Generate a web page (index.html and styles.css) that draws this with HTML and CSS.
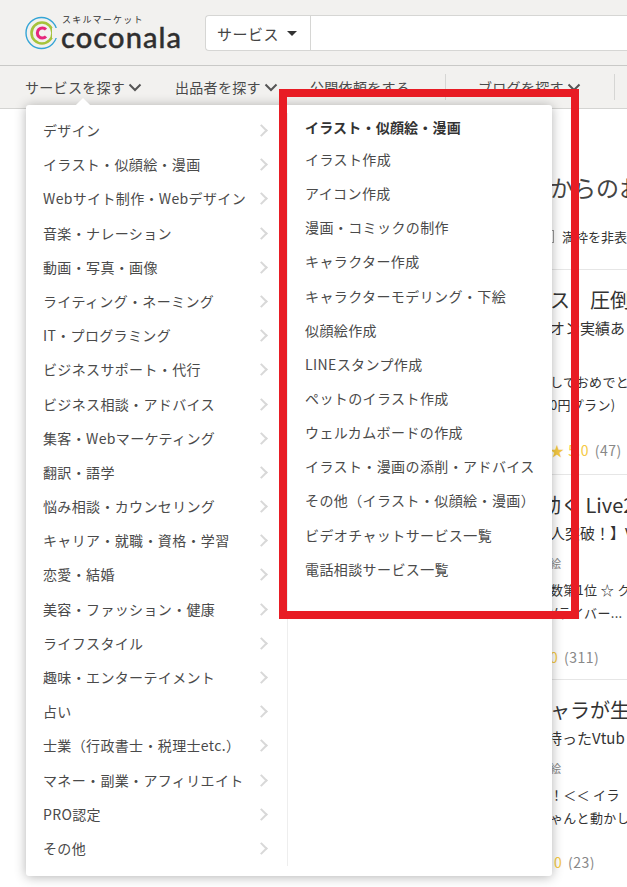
FILE: index.html
```html
<!DOCTYPE html>
<html lang="ja">
<head>
    <meta charset="UTF-8">
    <title>ココナラ</title>
    <link rel="stylesheet" href="styles.css">
</head>
<body>

<header class="top-bar">
    <a class="logo">
        <svg class="logo-mark" width="32" height="36" viewBox="0 0 32 36">
            <circle cx="16.5" cy="18" r="15.5" fill="none" stroke="#35a5d6" stroke-width="1.4"/>
            <circle cx="17" cy="18" r="10.5" fill="none" stroke="#a5c33c" stroke-width="2.6"/>
            <path d="M21 14.600a5 5 0 1 0 0 6.800" fill="none" stroke="#e6267c" stroke-width="3"/>
            <rect x="27" y="13" width="6" height="10" fill="#f2f1ef"/>
        </svg>
        <div class="logo-text">
            <span class="logo-kana">スキルマーケット</span>
            <span class="logo-name">coconala</span>
        </div>
    </a>
    <div class="search">
        <div class="search-select">サービス<span class="caret"></span></div>
        <div class="search-input"></div>
    </div>
</header>

<nav class="main-nav">
    <div class="nav-item nav-first">サービスを探す<svg class="chev" width="14" height="9" viewBox="0 0 14 9"><path d="M1.500 1.500 7 7l5.500-5.500"/></svg></div>
    <div class="nav-item nav-second">出品者を探す<svg class="chev" width="14" height="9" viewBox="0 0 14 9"><path d="M1.500 1.500 7 7l5.500-5.500"/></svg></div>
    <div class="nav-item nav-third">公開依頼をする</div>
    <div class="nav-item nav-fourth">ブログを探す<svg class="chev" width="14" height="9" viewBox="0 0 14 9"><path d="M1.500 1.500 7 7l5.500-5.500"/></svg></div>
    <div class="nav-item nav-last"></div>
</nav>

<main class="content">
    <h2 class="content-title">からのお</h2>
    <div class="filter"><span class="check"></span>満枠を非表</div>

    <article class="service service-one">
        <div class="service-title">ス　圧倒</div>
        <div class="service-sub">オン実績あ</div>
        <div class="service-desc">しておめでと<br>0円プラン)</div>
        <div class="rating"><span class="star">★ 5.0</span> (47)</div>
    </article>
    <article class="service service-two">
        <div class="service-title">動く Live2</div>
        <div class="service-sub">人突破！】V</div>
        <div class="service-cat">絵</div>
        <div class="service-desc">数第1位 ☆ ク<br>Vライバー...</div>
        <div class="rating"><span class="star">0</span> (311)</div>
    </article>
    <article class="service service-three">
        <div class="service-title">ャラが生</div>
        <div class="service-sub">持ったVtub</div>
        <div class="service-cat">絵</div>
        <div class="service-desc">！＜＜ イラ<br>ゃんと動かし</div>
        <div class="rating"><span class="star">0</span> (23)</div>
    </article>
</main>

<div class="mega-menu">
    <span class="menu-arrow"></span>
    <ul class="cat-list">
        <li>デザイン</li>
        <li>イラスト・似顔絵・漫画</li>
        <li>Webサイト制作・Webデザイン</li>
        <li>音楽・ナレーション</li>
        <li>動画・写真・画像</li>
        <li>ライティング・ネーミング</li>
        <li>IT・プログラミング</li>
        <li>ビジネスサポート・代行</li>
        <li>ビジネス相談・アドバイス</li>
        <li>集客・Webマーケティング</li>
        <li>翻訳・語学</li>
        <li>悩み相談・カウンセリング</li>
        <li>キャリア・就職・資格・学習</li>
        <li>恋愛・結婚</li>
        <li>美容・ファッション・健康</li>
        <li>ライフスタイル</li>
        <li>趣味・エンターテイメント</li>
        <li>占い</li>
        <li>士業（行政書士・税理士etc.）</li>
        <li>マネー・副業・アフィリエイト</li>
        <li>PRO認定</li>
        <li>その他</li>
    </ul>
    <ul class="sub-list">
        <li class="sub-head">イラスト・似顔絵・漫画</li>
        <li>イラスト作成</li>
        <li>アイコン作成</li>
        <li>漫画・コミックの制作</li>
        <li>キャラクター作成</li>
        <li>キャラクターモデリング・下絵</li>
        <li>似顔絵作成</li>
        <li>LINEスタンプ作成</li>
        <li>ペットのイラスト作成</li>
        <li>ウェルカムボードの作成</li>
        <li>イラスト・漫画の添削・アドバイス</li>
        <li>その他（イラスト・似顔絵・漫画）</li>
        <li>ビデオチャットサービス一覧</li>
        <li>電話相談サービス一覧</li>
    </ul>
</div>

<div class="red-frame"></div>

</body>
</html>
```

FILE: styles.css
```css
html, body {
    margin: 0;
    padding: 0;
}
body {
    position: relative;
    width: 627px;
    height: 887px;
    overflow: hidden;
    background-color: #fff;
    color: #333;
    font-family: "Noto Sans CJK JP", "Noto Sans", sans-serif;
    font-size: 14px;
}
ul {
    list-style: none;
    margin: 0;
    padding: 0;
}
.top-bar {
    display: flex;
    align-items: center;
    height: 66px;
    padding-left: 25px;
    box-sizing: border-box;
    background-color: #f2f1ef;
    border-bottom: 1px solid #c9c9c7;
}
.logo {
    display: flex;
    align-items: center;
    width: 180px;
}
.logo-mark {
    margin-right: 4px;
}
.logo-text {
    display: flex;
    flex-direction: column;
}
.logo-kana {
    font-size: 9px;
    line-height: 9px;
    letter-spacing: 1.2px;
    margin-left: 1px;
}
.logo-name {
    font-family: Lato, sans-serif;
    font-size: 29px;
    line-height: 26px;
    letter-spacing: 1.1px;
    font-weight: 500;
    color: #2f2f2f;
    -webkit-text-stroke: 0.4px #2f2f2f;
}
.search {
    display: flex;
    flex: 1;
    height: 36px;
    box-sizing: border-box;
    margin-top: 1px;
    background-color: #fff;
    border: 1px solid #d6d6d4;
    border-right: 0;
    border-radius: 4px 0 0 4px;
}
.search-select {
    display: flex;
    align-items: center;
    width: 105px;
    box-sizing: border-box;
    padding-left: 11px;
    border-right: 1px solid #d6d6d4;
    font-size: 15px;
    letter-spacing: 0.5px;
    color: #444;
}
.caret {
    margin-left: 8px;
    border-top: 5px solid #333;
    border-left: 5px solid transparent;
    border-right: 5px solid transparent;
}
.search-input {
    flex: 1;
}
.main-nav {
    position: relative;
    display: flex;
    align-items: center;
    height: 43px;
    box-sizing: border-box;
    background-color: #f2f1ef;
    border-bottom: 1px solid #d4d4d2;
    padding-left: 25px;
}
.nav-item {
    display: flex;
    align-items: center;
    font-size: 14px;
    letter-spacing: 0.3px;
    color: #4a4a4a;
    white-space: nowrap;
}
.chev {
    margin-left: 3px;
    fill: none;
    stroke: #555;
    stroke-width: 2;
}
.nav-first {
    width: 150px;
}
.nav-second {
    width: 135px;
}
.nav-third {
    width: 135px;
    height: 26px;
    border-right: 1px solid #d6d6d4;
}
.nav-fourth {
    width: 169px;
    height: 26px;
    padding-left: 32px;
    box-sizing: border-box;
    border-right: 1px solid #d6d6d4;
}
.content {
    padding: 63px 0 0 550px;
    white-space: nowrap;
    overflow: hidden;
}
.content-title {
    margin: 0;
    font-weight: 400;
    font-size: 23px;
    line-height: 30px;
    color: #444;
}
.filter {
    display: flex;
    align-items: center;
    margin-top: 24px;
    height: 20px;
    font-size: 13px;
}
.check {
    width: 3px;
    height: 11px;
    margin-right: 8px;
    border: 1px solid #999;
    border-left: 0;
}
.service {
    border-top: 1px solid #e6e6e6;
}
.service-one {
    height: 204px;
    margin-top: 23px;
}
.service-two {
    height: 204px;
}
.service-three {
    height: 190px;
}
.service-title {
    font-size: 20px;
    line-height: 28px;
    margin-top: 16px;
    color: #333;
}
.service-two .service-title {
    margin-left: -9px;
}
.service-sub {
    font-size: 15px;
    line-height: 20px;
    margin-top: 4px;
    color: #333;
}
.service-three .service-sub {
    margin-left: -3px;
}
.service-cat {
    font-size: 11px;
    line-height: 16px;
    margin-top: 12px;
    color: #888;
}
.service-desc {
    font-size: 13px;
    letter-spacing: 0.3px;
    line-height: 23px;
    margin-top: 7px;
    color: #333;
}
.service-one .service-desc {
    margin-top: 32px;
}
.rating {
    margin-top: 24px;
    font-size: 14px;
    letter-spacing: 0.5px;
    line-height: 18px;
    color: #888;
}
.service-one .rating {
    margin-top: 25px;
}
.service-three .rating {
    padding-left: 4px;
}
.star {
    margin-right: 2px;
    color: #f5c944;
}
.mega-menu {
    position: absolute;
    left: 26px;
    top: 105px;
    display: flex;
    width: 526px;
    height: 771px;
    box-sizing: border-box;
    padding-top: 8px;
    background-color: #fff;
    border-radius: 3px;
    box-shadow: 0 1px 12px rgba(0, 0, 0, 0.3);
}
.menu-arrow {
    position: absolute;
    left: 52px;
    top: -5px;
    width: 10px;
    height: 10px;
    background-color: #fff;
    transform: rotate(45deg);
}
.cat-list {
    width: 262px;
    height: 753px;
    box-sizing: border-box;
    padding-left: 17px;
    border-right: 1px solid #eee;
}
.cat-list li {
    position: relative;
    height: 34.19px;
    line-height: 34px;
    font-size: 14px;
    letter-spacing: 0.35px;
    color: #4a4a4a;
    white-space: nowrap;
}
.cat-list li::after {
    content: "";
    position: absolute;
    right: 21px;
    top: 13px;
    width: 7px;
    height: 7px;
    border-top: 2px solid #d8d8d8;
    border-right: 2px solid #d8d8d8;
    transform: rotate(45deg);
}
.sub-list {
    padding: 0 0 0 17px;
}
.sub-list li {
    height: 34.15px;
    line-height: 34px;
    font-size: 14px;
    letter-spacing: 0.4px;
    color: #4a4a4a;
    white-space: nowrap;
}
.sub-list .sub-head {
    height: 29px;
    line-height: 29px;
    font-weight: 700;
    letter-spacing: 0.2px;
    color: #333;
}
.red-frame {
    position: absolute;
    left: 279px;
    top: 89px;
    width: 300px;
    height: 530px;
    box-sizing: border-box;
    border: 8px solid #e81c24;
}
```
